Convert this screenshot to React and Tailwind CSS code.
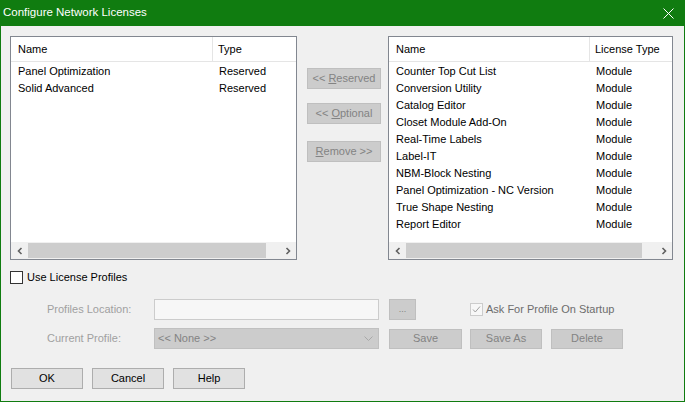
import React from "react";

const leftRows = [
  ["Panel Optimization", "Reserved"],
  ["Solid Advanced", "Reserved"],
];

const rightRows = [
  ["Counter Top Cut List", "Module"],
  ["Conversion Utility", "Module"],
  ["Catalog Editor", "Module"],
  ["Closet Module Add-On", "Module"],
  ["Real-Time Labels", "Module"],
  ["Label-IT", "Module"],
  ["NBM-Block Nesting", "Module"],
  ["Panel Optimization - NC Version", "Module"],
  ["True Shape Nesting", "Module"],
  ["Report Editor", "Module"],
];

function Chevron({ dir }) {
  return (
    <svg width="8" height="8" viewBox="0 0 8 8">
      {dir === "left" ? (
        <path d="M5.5 1 L2.5 4 L5.5 7" fill="none" stroke="#606060" strokeWidth="1.6" />
      ) : (
        <path d="M2.5 1 L5.5 4 L2.5 7" fill="none" stroke="#606060" strokeWidth="1.6" />
      )}
    </svg>
  );
}

function ListView({ width, col1, col2, col2Label, rows }) {
  return (
    <div
      className="flex flex-col bg-white border border-[#828790] h-[224px]"
      style={{ width }}
    >
      <div className="flex h-[25px] items-center border-b border-[#e5e5e5] text-black">
        <div className="pl-[7px] h-full flex items-center border-r border-[#e5e5e5]" style={{ width: col1 }}>
          Name
        </div>
        <div className="pl-[5px]">{col2Label}</div>
      </div>
      <div className="flex-1 flex flex-col pt-[1px]">
        {rows.map((r, i) => (
          <div key={i} className="flex h-[17px] items-center">
            <div className="pl-[7px]" style={{ width: col1 }}>{r[0]}</div>
            <div className="pl-[6px]" style={{ width: col2 }}>{r[1]}</div>
          </div>
        ))}
      </div>
      <div className="flex h-[17px] items-center bg-[#f0f0f0]">
        <div className="w-[17px] flex justify-center"><Chevron dir="left" /></div>
        <div className="flex-1 h-[15px] bg-[#cdcdcd] mr-[13px]" />
        <div className="w-[17px] flex justify-center"><Chevron dir="right" /></div>
      </div>
    </div>
  );
}

function DisabledButton({ children, className }) {
  return (
    <div
      className={
        "h-[20px] flex items-center justify-center bg-[#cccccc] border border-[#bfbfbf] text-[#838383] " +
        (className || "")
      }
    >
      {children}
    </div>
  );
}

function Button({ children }) {
  return (
    <div className="w-[72px] h-[21px] flex items-center justify-center bg-[#e1e1e1] border border-[#adadad] text-black">
      {children}
    </div>
  );
}

export default function App() {
  return (
    <div
      className="w-[685px] h-[402px] flex flex-col bg-[#107c10] border-x border-b border-[#107c10] text-[11px] overflow-hidden"
      style={{ fontFamily: '"Liberation Sans", Arial, sans-serif' }}
    >
      <div className="h-[26px] flex items-center justify-between text-white">
        <div className="pl-[2px] text-[11.5px]">Configure Network Licenses</div>
        <div className="w-[30px] flex justify-center mr-[1px]">
          <svg width="11" height="11" viewBox="0 0 11 11">
            <path d="M0.5 0.5 L10.5 10.5 M10.5 0.5 L0.5 10.5" stroke="white" strokeWidth="1" />
          </svg>
        </div>
      </div>

      <div className="flex-1 bg-[#f0f0f0] flex flex-col pl-[9px]">
        <div className="flex mt-[10px]">
          <ListView width="287px" col1="202px" col2="80px" col2Label="Type" rows={leftRows} />
          <div className="flex flex-col ml-[10px] w-[74px]">
            <DisabledButton className="mt-[32px] w-[74px] h-[21px]">
              &lt;&lt; <span className="underline ml-[3px]">R</span>eserved
            </DisabledButton>
            <DisabledButton className="mt-[14px] w-[74px] h-[21px]">
              &lt;&lt; <span className="underline ml-[3px]">O</span>ptional
            </DisabledButton>
            <DisabledButton className="mt-[17px] w-[74px] h-[21px]">
              <span className="underline">R</span>emove &gt;&gt;
            </DisabledButton>
          </div>
          <div className="ml-[7px]">
            <ListView width="285px" col1="201px" col2="80px" col2Label="License Type" rows={rightRows} />
          </div>
        </div>

        <div className="flex items-center mt-[11px] h-[13px]">
          <div className="w-[13px] h-[13px] border border-[#333333] bg-white" />
          <span className="ml-[4px] text-black">Use License Profiles</span>
        </div>

        <div className="flex items-center mt-[15px] h-[21px]">
          <div className="w-[144px] pl-[37px] text-[#a0a0a0] whitespace-nowrap">Profiles Location:</div>
          <div className="w-[225px] h-[21px] bg-[#f7f7f7] border border-[#cccccc]" />
          <DisabledButton className="ml-[10px] w-[27px] h-[21px] text-[9px]">...</DisabledButton>
          <div className="ml-[54px] flex items-center">
            <svg width="13" height="13" viewBox="0 0 13 13">
              <rect x="0.5" y="0.5" width="12" height="12" fill="#f7f7f7" stroke="#cccccc" />
              <path d="M3 6.5 L5.3 9 L10 3.5" fill="none" stroke="#a0a0a0" strokeWidth="1" />
            </svg>
            <span className="ml-[3px] text-[#6d6d6d]">Ask For Profile On Startup</span>
          </div>
        </div>

        <div className="flex items-center mt-[8px] h-[21px]">
          <div className="w-[144px] pl-[37px] text-[#a0a0a0] whitespace-nowrap">Current Profile:</div>
          <div className="w-[225px] h-[21px] bg-[#cccccc] border border-[#c0c0c0] flex items-center justify-between px-[3px] text-[#838383]">
            <span>&lt;&lt; None &gt;&gt;</span>
            <svg width="9" height="6" viewBox="0 0 9 6" className="mr-[2px]">
              <path d="M0.5 0.5 L4.5 4.5 L8.5 0.5" fill="none" stroke="#a8a8a8" strokeWidth="1" />
            </svg>
          </div>
          <DisabledButton className="ml-[10px] w-[73px] h-[20px]">Save</DisabledButton>
          <DisabledButton className="ml-[8px] w-[72px] h-[20px]">Save As</DisabledButton>
          <DisabledButton className="ml-[9px] w-[72px] h-[20px]">Delete</DisabledButton>
        </div>

        <div className="flex items-center mt-[19px] ml-[1px] gap-[9px]">
          <Button>OK</Button>
          <Button>Cancel</Button>
          <Button>Help</Button>
        </div>
      </div>
    </div>
  );
}
